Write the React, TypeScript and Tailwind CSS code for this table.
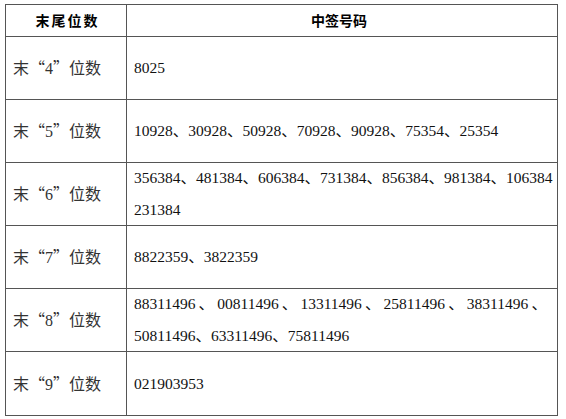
const cjk = "[font-family:'Noto_Sans_CJK_SC',sans-serif]";
const serif = "[font-family:'Liberation_Serif','Noto_Sans_CJK_SC',serif]";

type Row = { digit: string; lines: string[][] | string[]; justify?: boolean };

const rows: Row[] = [
  { digit: "4", lines: ["8025"] },
  { digit: "5", lines: ["10928、30928、50928、70928、90928、75354、25354"] },
  {
    digit: "6",
    lines: ["356384、481384、606384、731384、856384、981384、106384", "231384"],
  },
  { digit: "7", lines: ["8822359、3822359"] },
  {
    digit: "8",
    lines: [
      ["88311496", "、", "00811496", "、", "13311496", "、", "25811496", "、", "38311496", "、"],
      ["50811496、63311496、75811496"],
    ],
    justify: true,
  },
  { digit: "9", lines: ["021903953"] },
];

function LeftLabel({ digit }: { digit: string }) {
  return (
    <span className={`${cjk} text-[16px] text-[#333]`}>
      末“<span className={serif}>{digit}</span>”位数
    </span>
  );
}

export default function App() {
  return (
    <div className="min-h-[419px] bg-white pt-[4px] pl-[5px]" lang="zh-CN">
      <div className="flex w-[553px] flex-col border border-[#555]">
        <div className="flex h-[32px] border-b border-[#555]">
          <div className="flex w-[121px] items-center justify-center border-r border-[#555]">
            <span className={`${cjk} pl-[3px] text-[14px] font-bold tracking-[2px] text-black`}>
              末尾位数
            </span>
          </div>
          <div className="flex flex-1 items-center justify-center pr-[6px]">
            <span className={`${cjk} text-[14px] font-bold text-black`}>中签号码</span>
          </div>
        </div>
        {rows.map((row, i) => (
          <div
            key={row.digit}
            className={`flex h-[63px] ${i < rows.length - 1 ? "border-b border-[#555]" : ""}`}
          >
            <div className="flex w-[121px] items-center border-r border-[#555] pl-[7px]">
              <LeftLabel digit={row.digit} />
            </div>
            <div
              className={`${serif} flex flex-1 flex-col justify-center pl-[7px] pr-[4px] text-[15.5px] leading-[32px] text-[#111]`}
            >
              {row.justify
                ? (row.lines as string[][]).map((parts, j) =>
                    parts.length > 1 ? (
                      <div key={j} className="flex w-[413px] justify-between whitespace-nowrap">
                        {parts.map((p, k) => (
                          <span key={k}>{p}</span>
                        ))}
                      </div>
                    ) : (
                      <div key={j} className="whitespace-nowrap">
                        {parts[0]}
                      </div>
                    )
                  )
                : (row.lines as string[]).map((l, j) => (
                    <div key={j} className="whitespace-nowrap">
                      {l}
                    </div>
                  ))}
            </div>
          </div>
        ))}
      </div>
    </div>
  );
}
